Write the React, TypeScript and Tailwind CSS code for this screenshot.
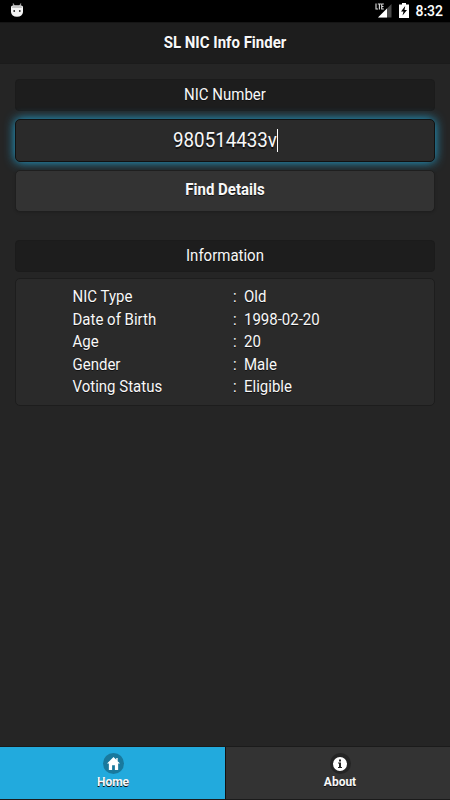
import React from 'react';

interface Detail {
    label: string;
    value: string;
}

const details: Detail[] = [
    { label: 'NIC Type', value: 'Old' },
    { label: 'Date of Birth', value: '1998-02-20' },
    { label: 'Age', value: '20' },
    { label: 'Gender', value: 'Male' },
    { label: 'Voting Status', value: 'Eligible' },
];

const StatusBar: React.FC = () => (
    <div className="h-[22px] shrink-0 bg-black flex items-center text-white">
        <svg width="14" height="14" viewBox="0 0 14 14" className="ml-[10px] -mt-[2px]">
            <path d="M3 .5 4.3 3M11 .5 9.7 3" stroke="#999" strokeWidth="1.2" />
            <path d="M1 4Q1 2.500 3 2.500H11Q13 2.500 13 4V9Q12.500 13.700 7 13.700T1 9z" fill="#f4f4f4" />
            <path d="M3 2.500H11L12.500 5H1.500z" fill="#c4c4c4" />
            <circle cx="4.200" cy="8" r=".9" fill="#222" />
            <circle cx="9.800" cy="8" r=".9" fill="#222" />
        </svg>
        <div className="ml-auto flex items-center">
            <svg width="17" height="15" viewBox="0 0 17 15" className="-mt-[1px]">
                <path d="M16.500 1V14.500H3z" fill="#4a4a4a" />
                <path d="M12 5.500V14.500H3z" fill="#fff" />
                <path d="M0 0H9V7H0z" fill="#000" />
                <path d="M1 .5V6H3M2.800 1H6M4.400 1V6.500M8.800 1H6.700V6H8.800M6.700 3.500H8.500" fill="none" stroke="#ddd" strokeWidth="1.1" />
            </svg>
            <svg width="10" height="15" viewBox="0 0 10 15" className="ml-[7px] -mt-[2px]">
                <path d="M3 0H7V1.500H10V15H0V1.500H3z" fill="#fff" />
                <path d="M6.200 3 2 8.500H4.500L3.500 12.500 8 7H5.500z" fill="#000" />
            </svg>
            <span className="ml-[6px] mr-[7px] text-[14px] leading-[22px] font-medium">8:32</span>
        </div>
    </div>
);

const BarLabel: React.FC<{ text: string }> = ({ text }) => (
    <div className="h-8 rounded-[4px] bg-[#1d1d1d] border border-[#1b1b1b] text-center text-[15px] leading-[30px]">
        <span className="inline-block scale-y-[1.07]">{text}</span>
    </div>
);

const App: React.FC = () => {
    return (
        <div className="w-[450px] h-[800px] overflow-hidden flex flex-col bg-[#252525] text-[#f8f8f8] font-[Roboto,sans-serif] [text-shadow:0_1px_0_#111]">
            <StatusBar />
            <header className="h-[42px] shrink-0 bg-[#1d1d1d] border-y border-t-[#151515] border-b-[#1b1b1b] text-center text-[15px] leading-[40px] font-bold">
                <span className="inline-block scale-y-[1.07]">SL NIC Info Finder</span>
            </header>

            <main className="flex-1 px-[15px] pt-[15px]">
                <BarLabel text="NIC Number" />
                <div className="mt-2 h-[43px] rounded-[5px] bg-[#2a2a2a] border border-[#111] shadow-[0_0_11px_#22aadd] flex items-center justify-center text-[18.75px]">
                    <span className="pt-[2px] scale-y-[1.07]">980514433v</span>
                    <span className="w-px h-[23px] -mr-px bg-white" />
                </div>
                <button className="block w-full mt-2 h-[42px] rounded-[5px] bg-[#333] border border-[#1f1f1f] shadow-[0_1px_3px_rgba(0,0,0,0.15)] pb-[2px] text-[15px] leading-[37px] font-bold [text-shadow:0_1px_0_#111]">
                    <span className="inline-block scale-y-[1.07]">Find Details</span>
                </button>

                <div className="mt-7">
                    <BarLabel text="Information" />
                </div>
                <div className="mt-[6px] h-32 rounded-[5px] bg-[#2a2a2a] border border-[#1d1d1d] pt-[7px] pl-[56.5px] text-[15px] leading-[22.5px]">
                    {details.map((item) => (
                        <div key={item.label} className="flex scale-y-[1.07]">
                            <span className="w-[160.5px]">{item.label}</span>
                            <span className="w-[11px]">:</span>
                            <span>{item.value}</span>
                        </div>
                    ))}
                </div>
            </main>

            <footer className="h-[54px] shrink-0 flex border-y border-[#1b1b1b] text-[12px] leading-[14px] font-bold">
                <div className="w-[226px] bg-[#22aadd] border-r border-[#111] flex flex-col items-center pt-[6px] pl-[1px]">
                    <span className="size-[21px] rounded-full bg-[#19799d] flex items-center justify-center">
                        <svg width="13" height="13" viewBox="0 0 14 14">
                            <path d="M7 0 0 7H2V14H5.500V9H8.500V14H12V7H14L11.500 4.500V1H10V3z" fill="#fff" />
                        </svg>
                    </span>
                    <span className="mt-[1px]">Home</span>
                </div>
                <div className="flex-1 bg-[#333] flex flex-col items-center pt-[6px] pl-[4px]">
                    <span className="size-[21px] rounded-full bg-[#242424] flex items-center justify-center">
                        <svg width="14" height="14" viewBox="0 0 14 14">
                            <circle cx="7" cy="7" r="7" fill="#fff" />
                            <path d="M6 2.500H8V4.500H6zM5 5.500H8V10H9V11H5V10H6V6.500H5z" fill="#242424" />
                        </svg>
                    </span>
                    <span className="mt-[1px]">About</span>
                </div>
            </footer>
        </div>
    );
};

export default App;
